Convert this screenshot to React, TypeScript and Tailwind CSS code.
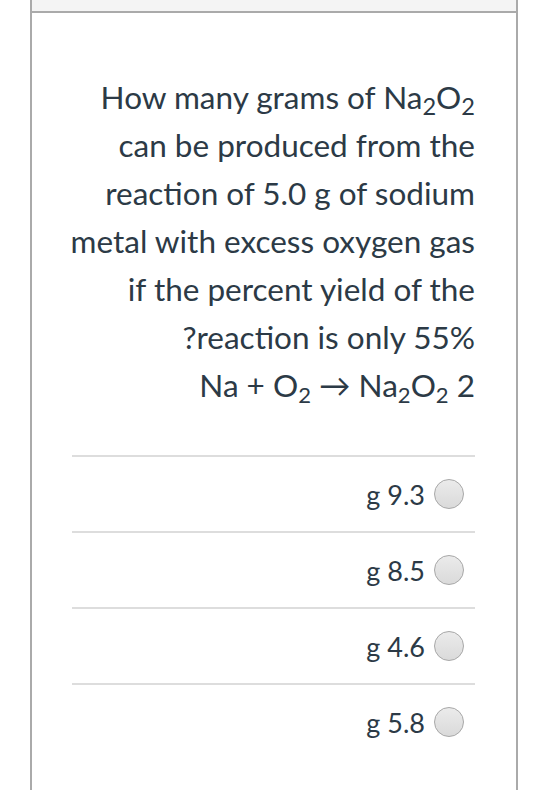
import React from "react";

const options = ["9.3", "8.5", "4.6", "5.8"];

export default function App() {
  return (
    <div className="min-h-screen bg-white font-['Lato','Liberation_Sans',sans-serif] text-[#2c3a46]">
      <div className="ml-[30px] w-[488px] min-h-[790px] border-x-2 border-[#aaaaaa]">
        <div className="h-[11px] bg-[#f4f4f4]" />
        <div className="border-t-2 border-[#aaaaaa] pt-[60px]">
          {/* question */}
          <div className="pl-[30px] pr-[41px] text-[31.5px] leading-[48px]">
            <div dir="rtl">
              How many grams of Na<sub>2</sub>O<sub>2</sub> can be produced from the reaction of 5.0 g of sodium
              metal with excess oxygen gas if the percent yield of the reaction is only 55%?
            </div>
            <div dir="rtl">
              Na + O<sub className="text-[70%]">2</sub> → Na<sub className="text-[70%]">2</sub>O
              <sub className="text-[70%]">2</sub> 2
            </div>
          </div>

          {/* answers */}
          <div className="mt-[46px] pl-[40px] pr-[41px]">
            {options.map((opt) => (
              <div
                key={opt}
                dir="rtl"
                className="flex h-[76px] items-center gap-[9px] border-t-2 border-[#dddddd] pr-[11px]"
              >
                <span className="h-[30px] w-[30px] shrink-0 rounded-full border border-[#a9a9a9] bg-[#e2e2e2] bg-linear-to-b from-[#ebebeb] to-[#dadada]" />
                <span className="text-[27px] leading-none">{opt} g</span>
              </div>
            ))}
          </div>
        </div>
      </div>
    </div>
  );
}
